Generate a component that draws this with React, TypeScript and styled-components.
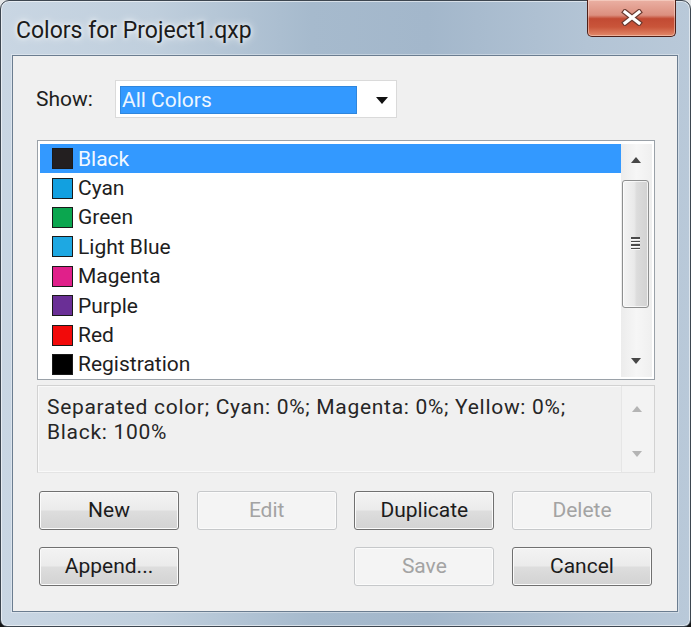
import React from 'react';
import styled, { createGlobalStyle } from 'styled-components';

const Global = createGlobalStyle`
  html, body { margin: 0; padding: 0; }
  body {
    width: 691px;
    height: 627px;
    overflow: hidden;
    background: linear-gradient(#e4e6e8 0%, #e4e6e8 50%, #141517 51%, #141517 100%);
    font-family: Roboto, "Liberation Sans", sans-serif;
  }
`;

const Window = styled.div`
  box-sizing: border-box;
  width: 691px;
  height: 627px;
  border: 1px solid #3d4650;
  border-radius: 9px 9px 7px 7px;
  background: linear-gradient(to right, #c9d6e3 0%, #c0cfdd 22%, #a6bacd 45%, #a3b7cb 62%, #b3c4d5 85%, #b9c9d9 100%);
  box-shadow: inset 0 0 0 1px rgba(255, 255, 255, 0.55);
  padding: 0 12px 14px 11px;
  display: flex;
  flex-direction: column;
`;

const TitleBar = styled.div`
  height: 54px;
  flex: none;
  display: flex;
  align-items: flex-start;
  justify-content: space-between;
`;

const Title = styled.div`
  margin: 16px 0 0 4px;
  font-size: 23px;
  line-height: 28px;
  color: #1b1b1b;
  text-shadow: 0 0 10px rgba(255, 255, 255, 0.95), 0 0 4px rgba(255, 255, 255, 0.8);
`;

const CloseButton = styled.div`
  box-sizing: border-box;
  width: 89px;
  height: 37px;
  margin: -1px 2px 0 0;
  border: 1px solid #4d1f18;
  border-top: none;
  border-radius: 0 0 5px 5px;
  background: linear-gradient(#eab0a3 0%, #dc8f7f 42%, #c24a33 52%, #c9553a 75%, #e2896a 100%);
  box-shadow: inset 0 0 0 1px rgba(255, 230, 220, 0.45);
  display: flex;
  align-items: center;
  justify-content: center;
  padding-bottom: 2px;
`;

const Client = styled.div`
  flex: 1;
  box-sizing: border-box;
  background: #f0f0f0;
  border: 1px solid #6b7d90;
  box-shadow: 0 0 0 1px rgba(255, 255, 255, 0.35);
  padding: 24px 22px 0 24px;
  display: flex;
  flex-direction: column;
  color: #1e1e1e;
  font-size: 21px;
`;

const ShowRow = styled.div`
  display: flex;
  align-items: center;
  height: 38px;
`;

const ShowLabel = styled.span`
  width: 79px;
  margin-left: -1px;
`;

const Combo = styled.div`
  box-sizing: border-box;
  width: 282px;
  height: 38px;
  border: 1px solid #dadada;
  background: #fff;
  padding: 5px 0 3px 4px;
  display: flex;
  align-items: stretch;
`;

const ComboValue = styled.div`
  flex: 1;
  background: #3399ff;
  border: 1px solid #2f86dd;
  color: #eef6ff;
  padding-left: 1px;
  display: flex;
  align-items: center;
`;

const ComboArrow = styled.div`
  width: 39px;
  display: flex;
  align-items: center;
  justify-content: center;
  padding-left: 11px;
  box-sizing: border-box;
`;

const ListBox = styled.div`
  box-sizing: border-box;
  margin-top: 22px;
  height: 240px;
  border: 1px solid #9aa1a8;
  background: #fff;
  padding: 3px 2px 2px 2px;
  display: flex;
`;

const Rows = styled.div`
  flex: 1;
  display: flex;
  flex-direction: column;
`;

const Row = styled.div<{ $selected?: boolean }>`
  height: 29.4px;
  flex: none;
  display: flex;
  align-items: center;
  padding-left: 12px;
  gap: 5px;
  background: ${(p) => (p.$selected ? '#3399ff' : 'transparent')};
  color: ${(p) => (p.$selected ? '#f2f8ff' : '#1e1e1e')};
`;

const Swatch = styled.span<{ $color: string }>`
  box-sizing: border-box;
  width: 21px;
  height: 21px;
  border: 1.5px solid #1a1a1a;
  background: ${(p) => p.$color};
`;

const ScrollBar = styled.div`
  width: 31px;
  flex: none;
  display: flex;
  flex-direction: column;
  background: linear-gradient(to right, #ececec, #f6f6f6 50%, #efefef);
`;

const ScrollArrow = styled.div`
  height: 32px;
  flex: none;
  display: flex;
  align-items: center;
  justify-content: center;
  padding-right: 2px;
`;

const Track = styled.div`
  flex: 1;
  padding: 4px 3px 0 1px;
`;

const Thumb = styled.div`
  box-sizing: border-box;
  height: 128px;
  border: 1px solid #8e8f8f;
  border-radius: 3px;
  background: linear-gradient(to right, #f4f4f4 0%, #e9e9e9 45%, #dcdcdc 55%, #d2d2d2 100%);
  box-shadow: inset 0 0 0 1px rgba(255, 255, 255, 0.7);
  display: flex;
  align-items: center;
  justify-content: center;
`;

const Grip = styled.div`
  display: flex;
  flex-direction: column;
  gap: 2px;
  margin-top: -2px;
  span {
    display: block;
    width: 9px;
    height: 1.5px;
    background: #4a4a4a;
    box-shadow: 0 1px 0 #fafafa;
  }
`;

const DescBox = styled.div`
  box-sizing: border-box;
  margin-top: 5px;
  height: 88px;
  border: 1px solid #d2d2d2;
  border-bottom-color: #e4e4e4;
  background: #f0f0f0;
  box-shadow: inset 0 0 0 1px #f9f9f9;
  display: flex;
`;

const DescText = styled.div`
  flex: 1;
  padding: 9px 9px;
  letter-spacing: 0.7px;
  line-height: 25px;
  color: #262626;
`;

const DescScroll = styled.div`
  width: 33px;
  flex: none;
  border-left: 1px solid #e6e6e6;
  background: #f3f3f3;
  display: flex;
  flex-direction: column;
  justify-content: space-between;
  align-items: center;
  padding: 20px 2px 15px 0;
  box-sizing: border-box;
`;

const ButtonGrid = styled.div`
  margin-top: 18px;
  padding: 0 3px 0 2px;
  display: grid;
  grid-template-columns: repeat(4, 1fr);
  column-gap: 17.7px;
  row-gap: 17px;
`;

const Button = styled.div<{ $disabled?: boolean; $col?: number }>`
  box-sizing: border-box;
  height: 39px;
  grid-column: ${(p) => (p.$col ? String(p.$col) : 'auto')};
  border: 1px solid ${(p) => (p.$disabled ? '#c6c8ca' : '#707070')};
  border-radius: 3px;
  background: ${(p) =>
    p.$disabled
      ? '#f4f4f4'
      : 'linear-gradient(#f3f3f3 0%, #ebebeb 48%, #dddddd 52%, #d3d3d3 100%)'};
  box-shadow: inset 0 0 0 1px #fbfbfb;
  color: ${(p) => (p.$disabled ? '#a3a3a3' : '#1c1c1c')};
  display: flex;
  align-items: center;
  justify-content: center;
  padding-bottom: 1px;
`;

const Triangle = ({ up, color, w = 10, h = 6 }: { up?: boolean; color: string; w?: number; h?: number }) => (
  <svg width={w} height={h} viewBox={`0 0 ${w} ${h}`}>
    <polygon points={up ? `0,${h} ${w},${h} ${w / 2},0` : `0,0 ${w},0 ${w / 2},${h}`} fill={color} />
  </svg>
);

const CloseGlyph = () => (
  <svg width="22" height="17" viewBox="0 0 22 17">
    <g strokeLinecap="square">
      <path d="M4 3 L18 14 M18 3 L4 14" stroke="#6a3a30" strokeWidth="5.5" />
      <path d="M4 3 L18 14 M18 3 L4 14" stroke="#ffffff" strokeWidth="3.2" />
    </g>
  </svg>
);

const colors: { name: string; color: string }[] = [
  { name: 'Black', color: '#231f20' },
  { name: 'Cyan', color: '#12a0e0' },
  { name: 'Green', color: '#0ba64f' },
  { name: 'Light Blue', color: '#1ea8e2' },
  { name: 'Magenta', color: '#e0208a' },
  { name: 'Purple', color: '#6a2f96' },
  { name: 'Red', color: '#f20a0a' },
  { name: 'Registration', color: '#000000' },
];

export default function App() {
  return (
    <>
      <Global />
      <Window>
        <TitleBar>
          <Title>Colors for Project1.qxp</Title>
          <CloseButton>
            <CloseGlyph />
          </CloseButton>
        </TitleBar>
        <Client>
          <ShowRow>
            <ShowLabel>Show:</ShowLabel>
            <Combo>
              <ComboValue>All Colors</ComboValue>
              <ComboArrow>
                <Triangle color="#111" w={12} h={7} />
              </ComboArrow>
            </Combo>
          </ShowRow>
          <ListBox>
            <Rows>
              {colors.map((c, i) => (
                <Row key={c.name} $selected={i === 0}>
                  <Swatch $color={c.color} />
                  <span>{c.name}</span>
                </Row>
              ))}
            </Rows>
            <ScrollBar>
              <ScrollArrow>
                <Triangle up color="#474747" w={10} h={6} />
              </ScrollArrow>
              <Track>
                <Thumb>
                  <Grip>
                    <span />
                    <span />
                    <span />
                    <span />
                  </Grip>
                </Thumb>
              </Track>
              <ScrollArrow>
                <Triangle color="#474747" w={10} h={6} />
              </ScrollArrow>
            </ScrollBar>
          </ListBox>
          <DescBox>
            <DescText>
              Separated color; Cyan: 0%; Magenta: 0%; Yellow: 0%;
              <br />
              Black: 100%
            </DescText>
            <DescScroll>
              <Triangle up color="#b4b4b4" w={10} h={6} />
              <Triangle color="#b4b4b4" w={10} h={6} />
            </DescScroll>
          </DescBox>
          <ButtonGrid>
            <Button>New</Button>
            <Button $disabled>Edit</Button>
            <Button>Duplicate</Button>
            <Button $disabled>Delete</Button>
            <Button $col={1}>Append...</Button>
            <Button $col={3} $disabled>Save</Button>
            <Button $col={4}>Cancel</Button>
          </ButtonGrid>
        </Client>
      </Window>
    </>
  );
}
